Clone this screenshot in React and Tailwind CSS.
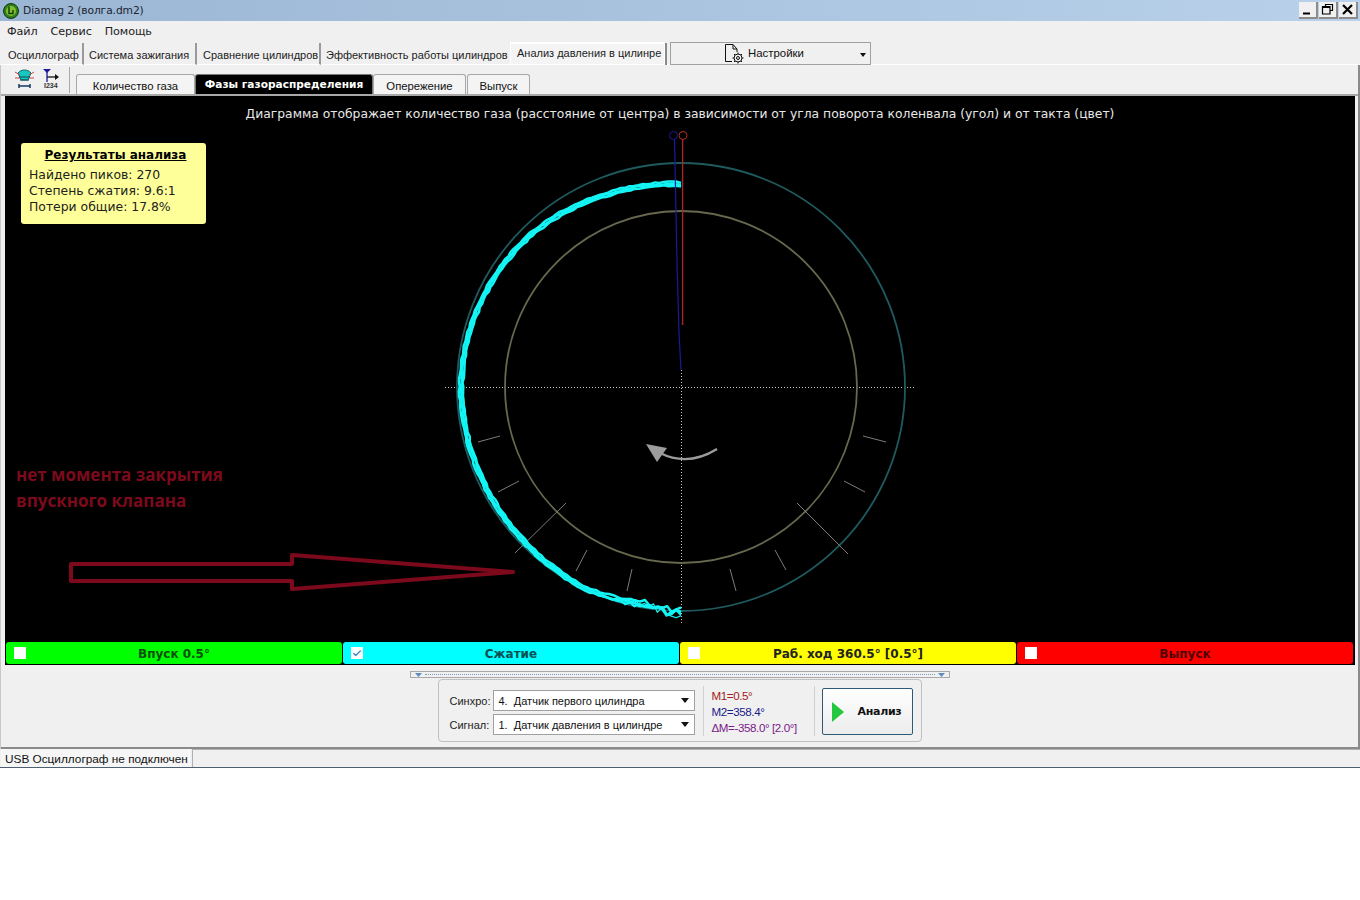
import { Check } from "lucide-react";

const UI_FONT = "font-['Liberation_Sans',Arial,sans-serif]";
const CX = 681;
const CY = 387;

// simple seeded noise so the trace stays the same on every render
function makeRandom(seed) {
  let s = seed;
  return () => {
    s = (s * 16807) % 2147483647;
    return s / 2147483647;
  };
}

function baseRadius(a) {
  const stops = [
    [0, 203],
    [20, 206],
    [45, 214],
    [70, 218],
    [90, 220],
    [110, 219],
    [135, 220],
    [155, 223],
    [170, 220],
    [180, 226],
  ];
  for (let i = 1; i < stops.length; i++) {
    if (a <= stops[i][0]) {
      const [a0, r0] = stops[i - 1];
      const [a1, r1] = stops[i];
      return r0 + ((r1 - r0) * (a - a0)) / (a1 - a0);
    }
  }
  return 224;
}

function tracePoints(seed, offset, noise) {
  const rnd = makeRandom(seed);
  const pts = [];
  for (let a = 0; a <= 180; a += 1.2) {
    const extra = a > 155 ? (a - 155) * 0.32 : 0;
    const r = baseRadius(a) + offset + (rnd() - 0.5) * (noise + extra);
    const t = (a * Math.PI) / 180;
    pts.push(`${(CX - r * Math.sin(t)).toFixed(1)},${(CY - r * Math.cos(t)).toFixed(1)}`);
  }
  return pts.join(" ");
}

const TRACES = [
  { seed: 11, offset: -1.8, noise: 1.4, w: 2.5 },
  { seed: 23, offset: 0, noise: 1.6, w: 2.5 },
  { seed: 37, offset: 1.8, noise: 1.4, w: 2.5 },
  { seed: 51, offset: 0.5, noise: 4.5, w: 1.2 },
].map((t) => ({ ...t, points: tracePoints(t.seed, t.offset, t.noise) }));

const TICKS = [
  [863, 436, 886, 442],
  [844, 481, 865, 492],
  [797, 503, 848, 554],
  [775, 550, 786, 570],
  [730, 569, 736, 591],
  [478, 442, 500, 436],
  [498, 492, 519, 481],
  [515, 553, 566, 503],
  [576, 571, 587, 550],
  [627, 591, 632, 569],
];

function Diagram() {
  return (
    <svg className="absolute left-[-5px] top-[-96px] pointer-events-none" width="1360" height="768" fill="none">
      <line x1="445" y1="387.5" x2="916" y2="387.5" stroke="#c8c8c8" strokeDasharray="1 2" />
      <line x1="681.5" y1="370" x2="681.5" y2="625" stroke="#c8c8c8" strokeDasharray="1 2" />
      <circle cx={CX} cy={CY} r="224" stroke="#1f5a5e" strokeWidth="1.8" />
      <circle cx={CX} cy={CY} r="176" stroke="#68684e" strokeWidth="1.8" />
      {TICKS.map((t, i) => (
        <line key={i} x1={t[0]} y1={t[1]} x2={t[2]} y2={t[3]} stroke="#8a8a8a" strokeWidth="0.9" />
      ))}
      {TRACES.map((t) => (
        <polyline key={t.seed} points={t.points} stroke="#14f4f4" strokeWidth={t.w} strokeLinejoin="round" />
      ))}
      <circle cx="673.5" cy="135.5" r="4" stroke="#1c1c9c" />
      <circle cx="683" cy="135.5" r="4" stroke="#b03028" />
      <polyline points="674.5,140 677,262 679,333 681,370" stroke="#1a1a9a" strokeWidth="1.2" />
      <line x1="682.6" y1="140" x2="682.6" y2="325" stroke="#a82828" strokeWidth="1.4" />
      {/* rotation arrow */}
      <path d="M717 449 Q 688 467 660 453" stroke="#9c9c9c" strokeWidth="2.4" />
      <path d="M646 444 L667 448 L657 462 Z" fill="#9c9c9c" />
      {/* hand-drawn annotation arrow */}
      <path
        d="M71 564 H292 V555 L513 572 L292 589 V581 H71 Z"
        stroke="#7c0a1c"
        strokeWidth="4"
        strokeLinejoin="round"
      />
    </svg>
  );
}

function AppIcon() {
  return (
    <svg width="16" height="16" viewBox="0 0 16 16" className="shrink-0">
      <circle cx="8" cy="8" r="7.5" fill="#2f7d1e" stroke="#123a10" />
      <circle cx="8" cy="8" r="5" fill="#7fbf2a" />
      <path d="M6 3.5 V10.5 H10 V7" stroke="#10380c" strokeWidth="1.4" fill="none" />
    </svg>
  );
}

function WinButton({ children }) {
  return (
    <div className="w-[19px] h-[17px] bg-[#f0f0f0] border-r-2 border-b-2 border-[#8c8c8c] flex items-center justify-center">
      <svg width="13" height="13" viewBox="0 0 13 13" fill="none" stroke="#000">
        {children}
      </svg>
    </div>
  );
}

function TopTab({ label, active, className }) {
  return (
    <div
      className={`h-[22px] flex items-center text-[11px] text-[#1c1c1c] whitespace-nowrap ${
        active ? "bg-[#f4f4f4] border-t-2 border-x border-white pb-[2px]" : "border-r-2 border-[#9a9a9a] border-b border-b-white pt-[3px]"
      } ${className}`}
    >
      {label}
    </div>
  );
}

function SubTab({ label, active, className }) {
  return (
    <div
      className={`h-[20px] flex items-center justify-center whitespace-nowrap rounded-t-[3px] border border-b-0 ${
        active
          ? "bg-black text-white font-bold font-['DejaVu_Sans',sans-serif] text-[10.6px] border-[#777]"
          : "bg-[#f4f4f4] text-[#111] text-[11.3px] border-[#a8a8a8]"
      } ${className}`}
    >
      {label}
    </div>
  );
}

function PhaseBar({ label, color, checked, textColor }) {
  return (
    <div className={`relative h-[22px] rounded-[3px] flex items-center justify-center ${color}`}>
      <div className="absolute left-[8px] top-[5px] w-[12px] h-[12px] bg-white flex items-center justify-center border border-white">
        {checked && <Check size={11} strokeWidth={3.5} className="text-[#4a8cc8]" />}
      </div>
      <span className={`pt-[1px] text-[12px] font-bold font-['DejaVu_Sans',sans-serif] ${textColor}`}>{label}</span>
    </div>
  );
}

function Combo({ label, value }) {
  return (
    <div className="flex items-center h-[20px]">
      <span className="w-[43px] pt-[1px] text-[11px] text-[#222] whitespace-nowrap">{label}</span>
      <div className="w-[202px] h-[21px] bg-white border border-[#a0a0a0] flex items-center pl-[5px] pr-[5px] text-[11px] text-[#111]">
        <span className="flex-1 pt-[1px] whitespace-pre">{value}</span>
        <svg width="8" height="5" viewBox="0 0 8 5">
          <path d="M0 0 H8 L4 5 Z" fill="#111" />
        </svg>
      </div>
    </div>
  );
}

export default function App() {
  return (
    <div className={`w-[1360px] h-[900px] bg-white overflow-hidden ${UI_FONT}`}>
      <div className="h-[768px] bg-[#f0f0f0] flex flex-col border-b border-[#4d5f70]">
        {/* title bar */}
        <div className="h-[21px] shrink-0 bg-gradient-to-r from-[#9bb6d4] to-[#b9d1ea] flex items-center pl-[3px] pr-[2px]">
          <AppIcon />
          <span className="ml-[4px] pt-[1px] text-[10.7px] text-[#1a2430] font-['DejaVu_Sans',sans-serif] tracking-[-0.1px]">
            Diamag 2 (волга.dm2)
          </span>
          <div className="ml-auto flex gap-[1px]">
            <WinButton>
              <path d="M2 10.5 H9" strokeWidth="2" />
            </WinButton>
            <WinButton>
              <path d="M4.5 3.5 V1.5 H11.5 V7.5 H9.5 M1.5 3.5 H9 V11 H1.5 Z M1.5 4.5 H9" strokeWidth="1.2" />
            </WinButton>
            <WinButton>
              <path d="M2 2 L11 11 M11 2 L2 11" strokeWidth="2.2" />
            </WinButton>
          </div>
        </div>

        {/* menu */}
        <div className="h-[22px] shrink-0 flex items-center pl-[7px] gap-[13px] text-[11.2px] text-[#222] font-['DejaVu_Sans',sans-serif] tracking-[-0.1px]">
          <span>Файл</span>
          <span>Сервис</span>
          <span>Помощь</span>
        </div>

        {/* main tabs */}
        <div className="h-[22px] shrink-0 flex items-start border-b border-white pl-[3px]">
          <TopTab label="Осциллограф" className="w-[81px] pl-[5px]" />
          <TopTab label="Система зажигания" className="w-[113px] pl-[5px]" />
          <TopTab label="Сравнение цилиндров" className="w-[124px] pl-[6px]" />
          <TopTab label="Эффективность работы цилиндров" className="w-[189px] pl-[5px] !border-r-0" />
          <TopTab label="Анализ давления в цилинре" active className="w-[155px] pl-[6px] -mt-[1px]" />
          <div className="w-[2px] h-[22px] bg-[#8a8a8a]" />
          <div className="ml-[3px] -mt-[1px] w-[201px] h-[23px] border border-[#a0a0a0] flex items-center pl-[53px] pr-[4px] text-[11.4px] text-[#111]">
            <svg width="22" height="21" viewBox="0 0 22 21" fill="none" stroke="#111" className="mr-[2px]">
              <path d="M1.5 1.5 H9 L13 6 V9 M9 1.5 V6 H13 M1.5 1.5 V18.5 H8" />
              <circle cx="14" cy="15" r="4" />
              <circle cx="14" cy="15" r="1.5" />
              <path d="M14 9.5 V11 M14 19 V20.5 M8.5 15 H10 M18 15 H19.5 M10 11 L11 12 M17 18 L18 19 M18 11 L17 12 M11 18 L10 19" />
            </svg>
            <span className="pt-[1px]">Настройки</span>
            <svg width="6" height="4" viewBox="0 0 6 4" className="ml-auto mt-[3px]">
              <path d="M0 0 H6 L3 4 Z" fill="#111" />
            </svg>
          </div>
        </div>

        <div className="flex-1 flex flex-col border-l border-l-[#c8c8c8] border-r-2 border-r-[#8a8a8a] min-h-0">
          {/* sub toolbar and tabs */}
          <div className="h-[31px] shrink-0 flex items-end border-b-2 border-[#a8a8a8] pl-[13px]">
            <div className="flex items-center h-[30px] gap-[7px] pb-[3px]">
              <svg width="21" height="22" viewBox="0 0 21 22" fill="none">
                <path d="M4 6 C7 2 14 2 17 6 L14 13 H7 Z" fill="#17c8c0" stroke="#0a6a70" />
                <path d="M1 5 L6 8 M20 5 L15 8 M1 11 H6 M20 11 H15" stroke="#d04040" />
                <path d="M5 10 H16 M6 13 H15" stroke="#0a4a50" />
                <path d="M5 19 H16 M5 17 V21 M16 17 V21" stroke="#143a60" strokeWidth="1.5" />
              </svg>
              <svg width="20" height="22" viewBox="0 0 20 22" fill="none">
                <path d="M1 2 H9 L5 6 Z" fill="#1a1a9a" />
                <path d="M5 5 V15" stroke="#1a1a9a" strokeWidth="1.3" />
                <path d="M5 10 H15" stroke="#111" strokeWidth="1.3" />
                <path d="M13 7 L17 10 L13 13 Z" fill="#111" />
                <text x="2" y="21" fontSize="7" fontWeight="700" fill="#333" fontFamily="'Liberation Sans',sans-serif">
                  I234
                </text>
              </svg>
            </div>
            <div className="w-[1px] h-[26px] bg-[#a8a8a8] ml-[7px] mb-[1px]" />
            <div className="flex ml-[6px]">
              <SubTab label="Количество газа" className="w-[119px] pt-[3px]" />
              <SubTab label="Фазы газораспределения" active className="w-[178px] pt-[1px]" />
              <SubTab label="Опережение" className="w-[93px] pt-[3px]" />
              <SubTab label="Выпуск" className="w-[63px] ml-[1px] pt-[3px]" />
            </div>
          </div>

          {/* black chart panel */}
          <div className="ml-[4px] w-[1350px] h-[569px] shrink-0 bg-black relative flex flex-col">
            <Diagram />
            <div className="relative pt-[9px] text-center text-[12.33px] leading-[18px] text-[#e8e8e8] font-['DejaVu_Sans',sans-serif]">
              Диаграмма отображает количество газа (расстояние от центра) в зависимости от угла поворота коленвала (угол) и от такта (цвет)
            </div>

            <div className="absolute left-[16px] top-[47px] w-[185px] h-[81px] bg-[#ffff99] rounded-[3px] pt-[4px] pl-[8px] pr-[4px] text-[12.4px] leading-[16px] text-[#222] font-['DejaVu_Sans',sans-serif]">
              <div className="text-center font-bold underline text-[12px] leading-[16px] text-black mb-[4px]">Результаты анализа</div>
              <div>Найдено пиков: 270</div>
              <div>Степень сжатия: 9.6:1</div>
              <div>Потери общие: 17.8%</div>
            </div>

            <div className="absolute left-[11px] top-[366px] text-[17px] leading-[26px] font-bold text-[#7c0a1c] font-['Open_Sans',sans-serif]">
              <div>нет момента закрытия</div>
              <div>впускного клапана</div>
            </div>

            <div className="relative mt-auto mb-[1px] ml-[1px] mr-[2px] grid grid-cols-4 gap-[1px]">
              <PhaseBar label="Впуск 0.5°" color="bg-[#00ff00]" textColor="text-[#0a500a]" />
              <PhaseBar label="Сжатие" color="bg-[#00ffff]" textColor="text-[#0a5050]" checked />
              <PhaseBar label="Раб. ход 360.5° [0.5°]" color="bg-[#ffff00]" textColor="text-[#222]" />
              <PhaseBar label="Выпуск" color="bg-[#ff0000]" textColor="text-[#500000]" />
            </div>
          </div>

          {/* bottom controls */}
          <div className="flex-1 flex flex-col items-center border-b-2 border-[#8a8a8a] pt-[6px]">
            <div className="w-[540px] h-[7px] border border-[#a8a8a8] flex items-center justify-between px-[4px]">
              <svg width="7" height="4" viewBox="0 0 7 4">
                <path d="M0 0 H7 L3.5 4 Z" fill="#5a8ec0" />
              </svg>
              <div className="flex-1 mx-[3px] border-t border-dotted border-[#7a9cc0]" />
              <svg width="7" height="4" viewBox="0 0 7 4">
                <path d="M0 0 H7 L3.5 4 Z" fill="#5a8ec0" />
              </svg>
            </div>
            <div className="mt-[1px] w-[484px] h-[63px] border border-[#c0c0c0] rounded-[4px] flex items-center pl-[11px] pt-[4px]">
              <div className="flex flex-col gap-[4px]">
                <Combo label="Синхро:" value="4.  Датчик первого цилиндра" />
                <Combo label="Сигнал:" value="1.  Датчик давления в цилиндре" />
              </div>
              <div className="w-[1px] h-[50px] bg-[#d0d0d0] ml-[8px] -mt-[4px]" />
              <div className="ml-[8px] -mt-[2px] w-[102px] flex flex-col gap-[1px] text-[11.6px] leading-[15px] tracking-[-0.4px] whitespace-nowrap">
                <span className="text-[#a02020]">M1=0.5°</span>
                <span className="text-[#1a1a8a]">M2=358.4°</span>
                <span className="text-[#7a1a8a]">ΔM=-358.0° [2.0°]</span>
              </div>
              <div className="w-[1px] h-[50px] bg-[#d0d0d0] -mt-[4px]" />
              <div className="ml-[7px] -mt-[2px] w-[91px] h-[47px] border border-[#2c5a78] rounded-[2px] bg-gradient-to-b from-white to-[#ececec] flex items-center pl-[9px]">
                <svg width="12" height="20" viewBox="0 0 12 20">
                  <path d="M0 0 L12 10 L0 20 Z" fill="#22c840" />
                </svg>
                <span className="ml-[14px] pt-[2px] text-[11px] font-bold text-[#111] font-['DejaVu_Sans',sans-serif] tracking-[-0.3px]">Анализ</span>
              </div>
            </div>
          </div>
        </div>

        {/* status bar */}
        <div className="h-[18px] shrink-0 flex pl-[1px] text-[11.8px] text-[#111]">
          <div className="w-[189px] bg-white/40 border-r border-white flex items-center pl-[4px] pt-[4px] whitespace-nowrap">USB Осциллограф не подключен</div>
          <div className="flex-1 ml-[2px] border-l border-t border-[#b0b0b0]" />
        </div>
      </div>
    </div>
  );
}
